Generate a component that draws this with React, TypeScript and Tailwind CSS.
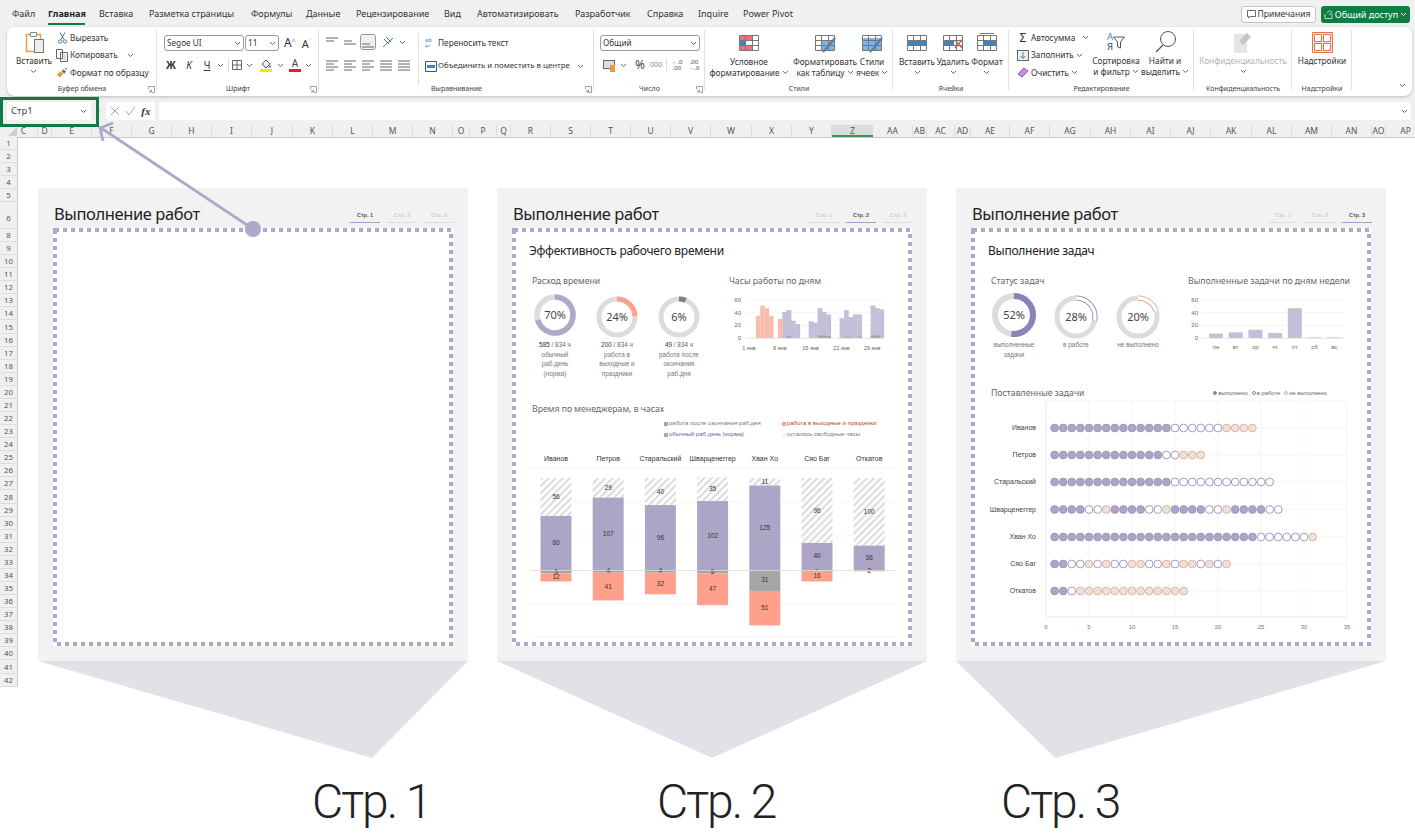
import React from "react";

const P = "#b0a8cc";
const PD = "#8b82b5";
const OR = "#f4a27a";
const tabs: [string, number][] = [["Файл",12],["Главная",48],["Вставка",99],["Разметка страницы",149],["Формулы",251],["Данные",306],["Рецензирование",356],["Вид",444],["Автоматизировать",477],["Разработчик",575],["Справка",647],["Inquire",698],["Power Pivot",743]];
const cols: [string, number][] = [["C",20],["D",14],["E",40],["F",40],["G",40],["H",40],["I",40],["J",41],["K",40],["L",40],["M",40],["N",40],["O",17],["P",27],["Q",14],["R",40],["S",40],["T",40],["U",40],["V",40],["W",41],["X",40],["Y",40],["Z",41],["AA",40],["AB",14],["AC",28],["AD",16],["AE",39],["AF",40],["AG",41],["AH",40],["AI",40],["AJ",40],["AK",41],["AL",40],["AM",40],["AN",40],["AO",14],["AP",40]];
const rows: [string, number][] = [];
for (let i = 1; i <= 42; i++) { if (i === 7) continue; rows.push([String(i), i === 6 ? 26.5 : 13.09]); }

const Chev = ({ className = "" }: { className?: string }) => (
  <svg width="7" height="5" viewBox="0 0 7 5" className={`shrink-0 ${className}`}><path d="M1 1l2.5 2.5L6 1" fill="none" stroke="#555" strokeWidth="0.9" /></svg>
);
const Launcher = () => (
  <svg width="7" height="7" viewBox="0 0 7 7"><path d="M.5 3V.5H6.5V6.5H4M1 3.5l2.5 2.500M3.500 3.500V6H1" fill="none" stroke="#777" strokeWidth="0.7" /></svg>
);
const Lines = ({ w }: { w: number[] }) => (
  <svg width="14" height="12" viewBox="0 0 14 12">
    {w.map((x, i) => x === 0 ? null : <line key={i} x1={1} x2={1 + x} y1={2 + i * 3} y2={2 + i * 3} stroke="#666" strokeWidth="1" />)}
  </svg>
);
const Grid = ({ children, size = 22 }: { children?: React.ReactNode; size?: number }) => (
  <svg width={size} height={size} viewBox="0 0 22 22">
    {children}
    <path d="M1.500 3.500h19v15h-19zM1.500 8.500h19M1.500 13.500h19M7.500 3.500v15M14.500 3.500v15" fill="none" stroke="#777" strokeWidth="1" />
  </svg>
);

const Group = ({ w, label, launcher, children }: { w: string; label: string; launcher?: boolean; children?: React.ReactNode }) => (
  <div className={`${w} flex flex-col h-full shrink-0 relative`}>
    <div className="flex-1 min-h-0">{children}</div>
    <div className="h-[13px] text-[7px] leading-[11px] text-center text-[#444] whitespace-nowrap">{label}</div>
    {launcher && <div className="absolute right-[2px] bottom-[3px]"><Launcher /></div>}
    <div className="absolute right-0 top-[3px] bottom-[6px] w-px bg-[#e1e1e1]" />
  </div>
);
const Big = ({ icon, lines, chev, w, dim, inline }: { icon: React.ReactNode; lines: string[]; chev?: boolean; w: string; dim?: boolean; inline?: boolean }) => (
  <div className={`${w} flex flex-col items-center shrink-0 pt-[3px] ${dim ? "text-[#b5b5b5]" : "text-[#333]"}`}>
    <div className="h-[24px] flex items-center justify-center">{icon}</div>
    <div className="text-[8.300px] leading-[11px] mt-[1px] text-center whitespace-nowrap">
      {lines.map((l, i) => (
        <div key={i} className="flex items-center justify-center gap-[2px]">{l}{inline && i === lines.length - 1 && <Chev />}</div>
      ))}
      {chev && <div className="flex justify-center h-[11px] items-center"><Chev /></div>}
    </div>
  </div>
);
const Small = ({ icon, text, chev }: { icon: React.ReactNode; text: string; chev?: string }) => (
  <div className="h-[17.500px] flex items-center text-[8.300px] text-[#333] whitespace-nowrap">
    <div className="w-[12px] flex justify-center shrink-0">{icon}</div>
    <span className="ml-[2px]">{text}</span>
    {chev && <Chev className={chev} />}
  </div>
);
const Select = ({ w, text }: { w: string; text: string }) => (
  <div className={`${w} h-[16px] border border-[#9a9a9a] rounded-[3px] bg-white flex items-center justify-between pl-[2px] pr-[2px] text-[8.200px] text-[#333]`}>
    <span>{text}</span><Chev />
  </div>
);

const Ribbon = () => (
  <div className="ml-[7px] w-[1405px] h-[69px] bg-white rounded-lg shadow-[0_1px_3px_rgba(0,0,0,0.22)] flex relative">
    <Group w="w-[150px]" label="Буфер обмена" launcher>
      <div className="flex">
        <Big w="w-[49px] pl-[5px]" lines={["Вставить"]} chev icon={
          <svg width="24" height="24" viewBox="0 0 24 24"><path d="M4.500 4.500h14v17h-14z" fill="none" stroke="#e9a23b" strokeWidth="1.500" /><path d="M8.500 2.500h6v4h-6z" fill="#fff" stroke="#888" strokeWidth="1" /><rect x="12.500" y="9.500" width="9" height="13" fill="#eee" stroke="#777" /></svg>
        } />
        <div className="pt-[2px]">
          <Small text="Вырезать" icon={<svg width="11" height="12" viewBox="0 0 11 12"><path d="M3 0.500l4 7M8 .5l-4 7" stroke="#666" fill="none" /><circle cx="3" cy="9.500" r="1.700" fill="none" stroke="#3a86c8" /><circle cx="8" cy="9.500" r="1.700" fill="none" stroke="#3a86c8" /></svg>} />
          <Small text="Копировать" chev="ml-[9px]" icon={<svg width="12" height="13" viewBox="0 0 12 13"><path d="M.5.500h6v9h-6zM4.500 3.500h7v9h-7z" fill="#fff" stroke="#666" /><path d="M6 6h4M6 8h4M6 10h4" stroke="#999" strokeWidth=".7" /></svg>} />
          <Small text="Формат по образцу" icon={<svg width="13" height="12" viewBox="0 0 13 12"><path d="M1 8l4-4 3 3-4 4z" fill="#ef9a3e" /><path d="M6 4l2-2 3 2-2 3z" fill="#777" /><path d="M10 1l2 1" stroke="#444" /></svg>} />
        </div>
      </div>
    </Group>
    <Group w="w-[162px]" label="Шрифт" launcher>
      <div className="pl-[7px] pt-[8px] flex items-center">
        <Select w="w-[80px]" text="Segoe UI" />
        <div className="w-px" />
        <Select w="w-[34px]" text="11" />
        <span className="ml-[5px] text-[12px] text-[#333] leading-none">A<sup className="text-[#4a90d0] text-[7px]">^</sup></span>
        <span className="ml-[6px] text-[11px] text-[#333] leading-none">A<sup className="text-[#4a90d0] text-[7px]">˅</sup></span>
      </div>
      <div className="pl-[5px] mt-[5px] flex items-center h-[18px] text-[#333]">
        <span className="w-[18px] text-center text-[10px] font-bold">Ж</span>
        <span className="w-[18px] text-center text-[10px] italic">К</span>
        <span className="w-[18px] text-center text-[10px] underline">Ч</span>
        <Chev className="ml-[1px]" />
        <div className="w-px h-[14px] bg-[#ddd] ml-[4px] mr-[2px]" />
        <svg width="12" height="12" viewBox="0 0 12 12"><path d="M1.500 1.500h9v9h-9zM6 1.500v9M1.500 6h9" fill="none" stroke="#666" /></svg>
        <Chev className="ml-[3px]" />
        <div className="w-[18px] ml-[4px] flex justify-center">
          <svg width="13" height="14" viewBox="0 0 13 14"><path d="M2 6l4-4 4 4-4 4z" fill="#eee" stroke="#555" /><path d="M10 7l1.500 2.500h-3z" fill="#3a86c8" /><rect x="0" y="11" width="12" height="3" fill="#ffe500" /></svg>
        </div>
        <Chev className="ml-[2px]" />
        <div className="w-[18px] ml-[2px] flex flex-col items-center">
          <span className="text-[10px] leading-[11px] text-[#444]">A</span>
          <span className="w-[12px] h-[3px] bg-[#e41f1f]" />
        </div>
        <Chev className="ml-[1px]" />
      </div>
    </Group>
    <Group w="w-[275px]" label="Выравнивание" launcher>
      <div className="flex">
        <div className="pl-[6px] pt-[6px] w-[99px]">
          <div className="flex items-center h-[18px] gap-[4px]">
            <Lines w={[12, 8, 0, 0]} /><Lines w={[0, 8, 12, 0]} />
            <div className="border border-[#999] rounded-[3px] bg-[#f0f0f0] w-[16px] h-[16px] flex items-center justify-center -mx-[1px]"><Lines w={[0, 0, 8, 12]} /></div>
            <svg className="ml-[3px]" width="13" height="13" viewBox="0 0 13 13"><path d="M1 11L11 2" stroke="#3a86c8" /><path d="M2 3l5 5M4 1l5 5" stroke="#666" /></svg>
            <Chev />
          </div>
          <div className="flex items-center h-[18px] mt-[5px] gap-[4px]">
            <Lines w={[12, 8, 12, 8]} /><Lines w={[12, 8, 12, 8]} /><Lines w={[12, 8, 12, 8]} /><Lines w={[12, 12, 12, 12]} /><Lines w={[12, 12, 12, 12]} />
          </div>
        </div>
        <div className="w-px h-[52px] mt-[6px] bg-[#e1e1e1]" />
        <div className="pl-[6px] pt-[4px]">
          <div className="h-[24px] flex items-center text-[8.300px] text-[#333]"><span className="text-[6px] leading-[6px] text-[#3a86c8] w-[13px]">ab<br />↩</span>Переносить текст</div>
          <div className="h-[22px] flex items-center text-[7.900px] text-[#333] whitespace-nowrap">
            <svg className="mr-[1px]" width="12" height="11" viewBox="0 0 12 11"><path d="M.5.500h11v10H.5z" fill="#fff" stroke="#555" /><rect x="2" y="4" width="8" height="3" fill="#3a86c8" /></svg>
            <span>Объединить и поместить в центре</span><Chev className="ml-[7px]" />
          </div>
        </div>
      </div>
    </Group>
    <Group w="w-[111px]" label="Число" launcher>
      <div className="pl-[6px] pt-[8px]"><Select w="w-[100px]" text="Общий" /></div>
      <div className="pl-[9px] mt-[5px] flex items-center h-[18px] text-[#444]">
        <svg width="13" height="13" viewBox="0 0 13 13"><rect x=".5" y="1.500" width="11" height="8" fill="#ddd" stroke="#666" /><rect x="7" y="6" width="5" height="7" fill="#ee9a3a" /></svg>
        <Chev className="ml-[4px]" />
        <span className="ml-[6px] w-[14px] text-[12px] text-center">%</span>
        <span className="ml-[3px] text-[7px] text-[#888]">000</span>
        <div className="w-px h-[14px] bg-[#ddd] ml-[4px]" />
        <span className="ml-[3px] w-[14px] text-[6px] leading-[6px] text-center"><span className="text-[#3a86c8]">←</span>.0<br />.00</span>
        <span className="ml-[3px] w-[14px] text-[6px] leading-[6px] text-center">.00<br /><span className="text-[#3a86c8]">→</span>.0</span>
      </div>
    </Group>
    <Group w="w-[188px]" label="Стили">
      <div className="flex pl-[3px] pt-[1px]">
        <Big w="w-[82px]" lines={["Условное", "форматирование"]} inline icon={<Grid><rect x="2" y="4" width="12" height="5" fill="#f26d7d" /><rect x="2" y="9" width="5" height="4" fill="#3a86c8" /><rect x="7" y="9" width="7" height="4" fill="#fff" /><rect x="2" y="13" width="12" height="5" fill="#f26d7d" /></Grid>} />
        <Big w="w-[70px]" lines={["Форматировать", "как таблицу"]} inline icon={<Grid><rect x="8" y="9" width="12" height="9" fill="#7db4e6" /><path d="M21 6L12 17l-3 3" stroke="#4a7fb0" strokeWidth="2" fill="none" /></Grid>} />
        <Big w="w-[28px] -ml-[2px]" lines={["Стили", "ячеек"]} inline icon={<Grid><rect x="2" y="6" width="18" height="12" fill="#7db4e6" /><path d="M21 6L12 17l-3 3" stroke="#4a7fb0" strokeWidth="2" fill="none" /></Grid>} />
      </div>
    </Group>
    <Group w="w-[116px]" label="Ячейки">
      <div className="flex pl-[6px] pt-[1px]">
        <Big w="w-[36px]" lines={["Вставить"]} chev icon={<Grid><rect x="2" y="8" width="18" height="6" fill="#3a86c8" /></Grid>} />
        <Big w="w-[36px]" lines={["Удалить"]} chev icon={<Grid><rect x="2" y="8" width="10" height="6" fill="#3a86c8" /><path d="M13 8l7 8M20 8l-7 8" stroke="#e1573c" strokeWidth="1.300" /></Grid>} />
        <Big w="w-[32px]" lines={["Формат"]} chev icon={<Grid><path d="M4 1.500h14" stroke="#3a86c8" /><rect x="7.500" y="8.500" width="13" height="5" fill="#3a86c8" /></Grid>} />
      </div>
    </Group>
    <Group w="w-[185px]" label="Редактирование">
      <div className="flex pl-[8px]">
        <div className="w-[76px] pt-[2px]">
          <Small text="Автосумма" chev="ml-[7px]" icon={<span className="text-[12px] leading-none">Σ</span>} />
          <Small text="Заполнить" chev="ml-[2px]" icon={<svg width="12" height="11" viewBox="0 0 12 11"><rect x=".5" y=".5" width="11" height="10" fill="#eee" stroke="#666" /><path d="M6 2v6M3.500 6L6 8.500 8.500 6" stroke="#3a86c8" fill="none" /></svg>} />
          <Small text="Очистить" chev="ml-[2px]" icon={<svg width="12" height="11" viewBox="0 0 12 11"><path d="M1 7l6-6 4 3-6 6z" fill="#c590d8" stroke="#9a50b5" /></svg>} />
        </div>
        <Big w="w-[46px]" lines={["Сортировка", "и фильтр"]} inline icon={
          <div className="flex items-center">
            <div className="flex flex-col items-center text-[9.500px] leading-[10px]"><span className="text-[#3a86c8]">А</span><span className="text-[#444]">Я</span></div>
            <svg width="12" height="13" viewBox="0 0 12 13"><path d="M.5 1h11l-4 5v6l-3-1V6z" fill="#fff" stroke="#555" /></svg>
          </div>
        } />
        <Big w="w-[44px] ml-[4px]" lines={["Найти и", "выделить"]} inline icon={<svg width="24" height="24" viewBox="0 0 24 24"><circle cx="15" cy="9" r="7.500" fill="none" stroke="#555" /><path d="M10 15l-7 7" stroke="#555" strokeWidth="1.200" /></svg>} />
      </div>
    </Group>
    <Group w="w-[98px]" label="Конфиденциальность">
      <Big w="w-full" dim lines={["Конфиденциальность"]} chev icon={<svg width="20" height="23" viewBox="0 0 20 23"><path d="M1 3h13v19H1z" fill="#e6e6e6" /><path d="M6 10l8-8 4 4-8 8z" fill="#c4c4c4" /></svg>} />
    </Group>
    <Group w="w-[60px]" label="Надстройки">
      <Big w="w-full" lines={["Надстройки"]} icon={<svg width="21" height="21" viewBox="0 0 21 21"><path d="M.5.500h20v20H.5z" fill="#fbe4dc" stroke="#e2734f" /><path d="M2.500 2.500h7v7h-7zM11.500 2.500h7v7h-7zM2.500 11.500h7v7h-7zM11.500 11.500h7v7h-7z" fill="#fff" stroke="#e2734f" /></svg>} />
    </Group>
    <div className="absolute right-[6px] bottom-[8px]"><Chev /></div>
  </div>
);

const Donut = ({ pct, color, stroke, r, sw, hollow }: { pct: number; color: string; stroke?: string; r: number; sw: number; hollow?: boolean }) => {
  const c = 2 * Math.PI * r;
  return (
    <svg width="46" height="46" viewBox="0 0 46 46" className="shrink-0">
      <circle cx="23" cy="23" r={r} fill="none" stroke="#dcdcdc" strokeWidth={sw} />
      <g transform="rotate(-90 23 23)">
        {hollow && <circle cx="23" cy="23" r={r} fill="none" stroke={stroke} strokeWidth={sw} strokeDasharray={`${c * pct / 100} ${c}`} />}
        <circle cx="23" cy="23" r={r} fill="none" stroke={color} strokeWidth={hollow ? sw - 1.6 : sw} strokeDasharray={`${c * pct / 100} ${c}`} />
      </g>
      <text x="23" y="27" textAnchor="middle" fontSize="11" fill="#444">{pct}%</text>
    </svg>
  );
};

const Header = ({ active }: { active: number }) => (
  <div className="flex items-end h-[40px] pr-[14px] pl-[16px]">
    <div className="flex-1 text-[16.500px] tracking-[-0.4px] leading-[24px] pb-[2px] text-[#222] whitespace-nowrap">Выполнение работ</div>
    <div className="flex gap-[7px] pb-[5px]">
      {[1, 2, 3].map(n => (
        <div key={n} className={`w-[30px] h-[12px] text-center text-[5.500px] leading-[9px] font-bold font-['Liberation_Sans',sans-serif] border-b ${n === active ? "text-[#555] border-[#a8a0c8]" : "text-[#cfcfcf] border-[#dcdcdc]"}`}>Стр. {n}</div>
      ))}
    </div>
  </div>
);

const Frame = ({ children }: { children?: React.ReactNode }) => (
  <div className="relative ml-[15px] w-[400px] h-[418px] bg-white">
    <svg className="absolute inset-0 pointer-events-none" width="400" height="418" viewBox="0 0 400 418">
      <rect x="2" y="2" width="396" height="414" fill="none" stroke={P} strokeWidth="4" strokeDasharray="4 4" />
    </svg>
    {children}
  </div>
);

const Sec = ({ children, className = "" }: { children: React.ReactNode; className?: string }) => (
  <div className={`h-[14px] text-[8.700px] leading-[14px] text-[#666] whitespace-nowrap ${className}`}>{children}</div>
);

const Tiny = ({ lines, first }: { lines: string[]; first?: React.ReactNode }) => (
  <div className="text-[6.400px] leading-[9.500px] text-[#777] text-center font-['Liberation_Sans',sans-serif] whitespace-nowrap">
    {first && <div className="text-[#666]">{first}</div>}
    {lines.map((l, i) => <div key={i}>{l}</div>)}
  </div>
);

const days = [0,0,35,51,47,35,0,30,41,44,27,22,0,0,26,24,47,41,37,0,0,31,44,33,37,37,0,0,51,47,45];
const pink = new Set([2,3,4,5,7]);
const dark: Record<number, number> = { 9: 3, 16: 4, 17: 4, 18: 3, 22: 2, 23: 1, 25: 2, 28: 4, 29: 4 };
const Y = (v: number) => 338 - v * 38 / 60;
const tiny = "Liberation Sans, sans-serif";

const DaysChart = () => (
  <svg width="170" height="64" viewBox="725 292 170 64">
    {[60, 40, 20].map(v => <line key={v} x1="747" x2="884" y1={Y(v)} y2={Y(v)} stroke="#f0f0f0" strokeWidth=".7" />)}
    {days.map((d, i) => d > 0 && <rect key={i} x={747 + i * 4.42} y={Y(d)} width={4.42} height={338 - Y(d)} fill={pink.has(i) ? "#f7bcae" : "#c4bfd8"} stroke="#b8b2d0" strokeWidth={pink.has(i) ? 0 : .2} />)}
    {Object.entries(dark).map(([k, v]) => <rect key={k} x={747 + +k * 4.42} y={338 - v * .63} width={4.42} height={v * .63} fill="#a3a0ab" />)}
    <line x1="747" x2="884" y1="338.300" y2="338.300" stroke="#dcdcdc" strokeWidth=".7" />
    {[60, 40, 20, 0].map(v => <text key={v} x="741" y={Y(v) + 2} textAnchor="end" fontSize="6" fill="#666" fontFamily={tiny}>{v}</text>)}
    {["1 янв", "8 янв", "15 янв", "22 янв", "29 янв"].map((t, i) => <text key={t} x={749 + i * 30.8} y="350" textAnchor="middle" fontSize="5.500" fill="#666" fontFamily={tiny}>{t}</text>)}
  </svg>
);

const WeekChart = () => {
  const v = [7, 9, 13, 8, 47, 1, 1];
  const n = ["пн", "вт", "ср", "чт", "пт", "сб", "вс"];
  return (
    <svg width="170" height="64" viewBox="1184 292 170 64">
      {[60, 40, 20].map(x => <line key={x} x1="1201" x2="1344" y1={Y(x)} y2={Y(x)} stroke="#f0f0f0" strokeWidth=".7" />)}
      {v.map((d, i) => <rect key={i} x={1209 + i * 19.700} y={Y(d)} width="14" height={338 - Y(d)} fill="#c4bfd8" />)}
      <line x1="1201" x2="1344" y1="338.300" y2="338.300" stroke="#dcdcdc" strokeWidth=".7" />
      {[60, 40, 20, 0].map(x => <text key={x} x="1198" y={Y(x) + 2} textAnchor="end" fontSize="6" fill="#666" fontFamily={tiny}>{x}</text>)}
      {n.map((t, i) => <text key={t} x={1216 + i * 19.700} y="349" textAnchor="middle" fontSize="6" fill="#666" fontFamily={tiny}>{t}</text>)}
    </svg>
  );
};

const mgr: [string, number, number, number, number][] = [
  ["Иванов", 56, 80, 5, 12], ["Петров", 29, 107, 4, 41], ["Старальский", 40, 96, 4, 32], ["Шварценеггер", 35, 102, 5, 47], ["Хван Хо", 11, 125, 31, 51], ["Сяо Баг", 96, 40, 1, 16], ["Откатов", 100, 36, 0, 2],
];
const ManagerChart = () => {
  const k = 0.676, base = 570;
  return (
    <svg width="400" height="204" viewBox="512 442 400 204">
      <defs>
        <pattern id="hatch" width="5" height="5" patternUnits="userSpaceOnUse" patternTransform="rotate(-45)">
          <rect width="5" height="5" fill="#fff" /><rect width="5" height="2.200" fill="#dcdcdc" />
        </pattern>
      </defs>
      {[468, 502, 536, 604, 637].map(y => <line key={y} x1="530" x2="896" y1={y} y2={y} stroke="#f1f1f1" strokeWidth=".7" />)}
      {mgr.map(([n, free, norm, after, wk], i) => {
        const cx = 556 + i * 52.2, x = cx - 15.500;
        const h1 = norm * k, h2 = free * k, h3 = after * k, h4 = wk * k;
        const fs = 6.500;
        return (
          <g key={n}>
            <text x={cx} y="461" textAnchor="middle" fontSize="7" fill="#333" fontFamily={tiny}>{n}</text>
            <rect x={x} y={base - h1 - h2} width="31" height={h2} fill="url(#hatch)" />
            <rect x={x} y={base - h1} width="31" height={h1} fill="#aca5c6" />
            <rect x={x} y={base} width="31" height={h3} fill="#a6a6a6" />
            <rect x={x} y={base + h3} width="31" height={h4} fill="#ffa08c" />
            <text x={cx} y={base - h1 - h2 / 2 + 2} textAnchor="middle" fontSize={fs} fill="#333" fontFamily={tiny}>{free}</text>
            <text x={cx} y={base - h1 / 2 + 2} textAnchor="middle" fontSize={fs} fill="#333" fontFamily={tiny}>{norm}</text>
            {after > 0 && <text x={cx} y={base + (after < 2 ? 1 : Math.max(h3 / 2 + 2, 2))} textAnchor="middle" fontSize={fs} fill="#333" fontFamily={tiny}>{after > 1 ? after : "-"}</text>}
            <text x={cx} y={base + h3 + Math.max(h4 / 2 + 2, 2.500)} textAnchor="middle" fontSize={fs} fill="#333" fontFamily={tiny}>{wk}</text>
          </g>
        );
      })}
      <line x1="530" x2="896" y1="570.500" y2="570.500" stroke="#dcdcdc" strokeWidth=".8" />
    </svg>
  );
};

const seq = (s: [string, number][]) => s.flatMap(([c, n]) => Array<string>(n).fill(c));
const tasks: [string, string[]][] = [
  ["Иванов", seq([["d", 14], ["w", 6], ["n", 4]])],
  ["Петров", seq([["d", 13], ["w", 2], ["n", 3]])],
  ["Старальский", seq([["d", 14], ["w", 12]])],
  ["Шварценеггер", seq([["d", 4], ["w", 2], ["n", 1], ["d", 4], ["w", 2], ["n", 1], ["d", 4], ["w", 2], ["n", 1], ["d", 4], ["w", 2]])],
  ["Хван Хо", seq([["d", 24], ["w", 6], ["n", 1]])],
  ["Сяо Баг", "ddwwnwnwwnnwwnwnnwnwn".split("")],
  ["Откатов", seq([["d", 2], ["w", 1], ["n", 13]])],
];
const TaskChart = () => {
  const X = (v: number) => 1046 + v * 8.6;
  const ys = [428, 455, 482, 509.500, 537, 564, 591];
  return (
    <svg width="400" height="234" viewBox="971 400 400 234">
      <defs>
        <pattern id="hatch2" width="2.500" height="2.500" patternUnits="userSpaceOnUse" patternTransform="rotate(-45)">
          <rect width="2.500" height="2.500" fill="#f4f4f4" /><rect width="2.500" height="1.100" fill="#cfcfcf" />
        </pattern>
      </defs>
      {[0, 5, 10, 15, 20, 25, 30, 35].map(v => <g key={v}>
        <line x1={X(v)} x2={X(v)} y1="401" y2="617" stroke={v === 0 ? "#e4e4e4" : "#f1f1f1"} strokeWidth=".7" />
        <text x={X(v)} y="629" textAnchor="middle" fontSize="6" fill="#777" fontFamily={tiny}>{v}</text>
      </g>)}
      <line x1="1046" x2="1347" y1="401" y2="401" stroke="#f1f1f1" strokeWidth=".7" />
      <line x1="1046" x2="1347" y1="617" y2="617" stroke="#e4e4e4" strokeWidth=".7" />
      {tasks.map(([n, list], r) => <g key={n}>
        <line x1="1046" x2="1347" y1={ys[r]} y2={ys[r]} stroke="#f1f1f1" strokeWidth=".7" />
        <text x="1036" y={ys[r] + 2} textAnchor="end" fontSize="7" fill="#444" fontFamily={tiny}>{n}</text>
        {list.map((t, i) => <circle key={i} cx={X(i + 1)} cy={ys[r]} r="3.900" fill={t === "d" ? "#aca5c6" : t === "w" ? "#fff" : "url(#hatch2)"} stroke={t === "d" ? "#9a92bc" : t === "w" ? "#8b82b5" : "#f4a27a"} strokeWidth=".8" />)}
      </g>)}
    </svg>
  );
};

const LegendDot = ({ fill, stroke, text }: { fill: string; stroke: string; text: string }) => (
  <span className="flex items-center gap-[1px] text-[5.800px] text-[#666] font-['Liberation_Sans',sans-serif] whitespace-nowrap">
    <span className="w-[4px] h-[4px] rounded-full border-[0.700px]" style={{ background: fill, borderColor: stroke }} />{text}
  </span>
);
const LegendSq = ({ color, text, cls }: { color: string; text: string; cls: string }) => (
  <div className={`flex items-center gap-[1px] text-[6px] leading-[11px] font-['Liberation_Sans',sans-serif] whitespace-nowrap ${cls}`}>
    <span className="w-[4px] h-[4px]" style={{ background: color }} />{text}
  </div>
);

const Title = ({ children }: { children: React.ReactNode }) => (
  <div className="relative pl-[17px] pt-[14px] h-[46px] text-[12px] tracking-[-0.25px] leading-[18px] text-[#222] whitespace-nowrap">{children}</div>
);

const Page2 = () => (
  <Frame>
    <Title>Эффективность рабочего времени</Title>
    <div className="relative flex h-[128px]">
      <div className="w-[217px] pl-[12px]">
        <Sec className="pl-[8px]">Расход времени</Sec>
        <div className="flex">
          <div className="w-[62px] flex flex-col items-center pt-[4px]"><Donut pct={70} color={P} r={18} sw={5.500} /><div className="mt-[2px]"><Tiny first={<><span className="text-[#333]">585</span> / 834 ч</>} lines={["обычный", "раб.день", "(норма)"]} /></div></div>
          <div className="w-[62px] flex flex-col items-center pt-[6px]"><Donut pct={24} color="#ffa08c" r={18} sw={5} /><div><Tiny first={<><span className="text-[#333]">200</span> / 834 ч</>} lines={["работа в", "выходные и", "праздники"]} /></div></div>
          <div className="w-[62px] flex flex-col items-center pt-[6px]"><Donut pct={6} color="#7f7f7f" r={18} sw={5} /><div><Tiny first={<><span className="text-[#333]">49</span> / 834 ч</>} lines={["работа после", "окончания", "раб.дня"]} /></div></div>
        </div>
      </div>
      <div className="flex-1">
        <Sec>Часы работы по дням</Sec>
        <div className="-ml-[4px] mt-[4px]"><DaysChart /></div>
      </div>
    </div>
    <Sec className="relative pl-[20px]">Время по менеджерам, в часах</Sec>
    <div className="relative pl-[152px] grid grid-cols-[118px_1fr] h-[26px] pt-[2px] content-start">
      <LegendSq color="#a6a6a6" text="работа после окончания раб.дня" cls="text-[#777]" />
      <LegendSq color="#ffa08c" text="работа в выходные и праздники" cls="text-[#b5462f]" />
      <LegendSq color="#aca5c6" text="обычный раб.день (норма)" cls="text-[#6a6195]" />
      <LegendSq color="#f2f2f2" text="остались свободные часы" cls="text-[#777]" />
    </div>
    <div className="relative"><ManagerChart /></div>
  </Frame>
);
const Page3 = () => (
  <Frame>
    <Title>Выполнение задач</Title>
    <div className="relative flex h-[112px]">
      <div className="w-[217px] pl-[12px]">
        <Sec className="pl-[8px]">Статус задач</Sec>
        <div className="flex">
          <div className="w-[62px] flex flex-col items-center pt-[4px]"><Donut pct={52} color={PD} r={19} sw={6} /><div className="mt-[2px]"><Tiny lines={["выполненные", "задачи"]} /></div></div>
          <div className="w-[62px] flex flex-col items-center pt-[6px]"><Donut pct={28} color="#fff" stroke={PD} hollow r={19} sw={5} /><div><Tiny lines={["в работе"]} /></div></div>
          <div className="w-[62px] flex flex-col items-center pt-[6px]"><Donut pct={20} color="#fff" stroke={OR} hollow r={19} sw={5} /><div><Tiny lines={["не выполнено"]} /></div></div>
        </div>
      </div>
      <div className="flex-1">
        <Sec>Выполненные задачи по дням недели</Sec>
        <div className="-ml-[4px] mt-[4px]"><WeekChart /></div>
      </div>
    </div>
    <div className="relative flex items-center pl-[20px] pr-[44px] h-[14px] justify-between">
      <Sec>Поставленные задачи</Sec>
      <div className="flex gap-[4px]">
        <LegendDot fill="#8b82b5" stroke="#8b82b5" text="выполнено" />
        <LegendDot fill="#fff" stroke="#8b82b5" text="в работе" />
        <LegendDot fill="#fff" stroke={OR} text="не выполнено" />
      </div>
    </div>
    <div className="relative"><TaskChart /></div>
  </Frame>
);

const Card = ({ n, apex, cap, children }: { n: number; apex: number; cap: string; children?: React.ReactNode }) => (
  <div className="w-[430px] shrink-0">
    <div className="h-[473px] bg-[#f2f2f2]">
      <Header active={n} />
      {children}
    </div>
    <svg width="430" height="97" viewBox="0 0 430 97" className="block"><polygon points={`0,0 430,0 ${apex},97`} fill="#e1e2e8" /></svg>
    <div className={`text-[48px] leading-[56px] tracking-[-2px] font-light font-['Roboto',sans-serif] text-[#222] mt-[16px] whitespace-nowrap ${cap}`}>Стр. {n}</div>
  </div>
);

export default function App() {
  return (
    <div className="w-[1415px] h-[835px] relative overflow-hidden bg-white font-['Noto_Sans',sans-serif] flex flex-col">
      <div className="bg-[#f0f0f0] h-[137px] shrink-0 flex flex-col">
        <div className="h-[27px] flex relative shrink-0">
          <div className="relative w-[900px] text-[9px] leading-[27px] text-[#333]">
            <div className="flex">
              {tabs.map(([t, x], i) => (
                <div key={t} className={`whitespace-nowrap ${t === "Главная" ? "font-bold text-[#222] relative" : ""}`} style={{ width: (tabs[i + 1]?.[1] ?? x + 60) - x, marginLeft: i === 0 ? x : 0 }}>
                  {t}{t === "Главная" && <span className="absolute left-0 w-[37px] top-[23px] h-[2px] bg-[#107c41]" />}
                </div>
              ))}
            </div>
          </div>
          <div className="ml-auto flex items-center gap-[5px] pr-[5px] pt-[2px]">
            <div className="w-[75px] h-[17px] border border-[#c4c4c4] bg-white rounded-[3px] flex items-center justify-center gap-[2px] text-[8.500px] text-[#333]">
              <svg width="9" height="9" viewBox="0 0 9 9"><path d="M.5.500h8v6H3L1.500 8V6.500h-1z" fill="none" stroke="#444" strokeWidth=".8" /></svg>Примечания
            </div>
            <div className="w-[89px] h-[17px] bg-[#107c41] rounded-[3px] flex items-center justify-center gap-[2px] text-[9px] text-white whitespace-nowrap">
              <svg width="9" height="9" viewBox="0 0 9 9"><path d="M1 4v4.500h7V4M3 3l3-2.500L8 2.500 5 5" fill="none" stroke="#fff" strokeWidth=".7" /></svg>Общий доступ
              <svg width="7" height="5" viewBox="0 0 7 5"><path d="M1 1l2.500 2.500L6 1" fill="none" stroke="#fff" strokeWidth=".9" /></svg>
            </div>
          </div>
        </div>
        <Ribbon />
        <div className="h-[18px] mt-[6px] flex items-center shrink-0 pl-[7px]">
          <div className="w-[84px] h-full bg-white rounded-[3px] flex items-center justify-between px-[4px] text-[9.500px] text-[#444]">Стр1<Chev /></div>
          <div className="w-[15px] text-center text-[#aaa] text-[8px]">⋮</div>
          <div className="w-[49px] h-full bg-white rounded-[3px] flex items-center justify-around px-[2px]">
            <svg width="10" height="10" viewBox="0 0 10 10"><path d="M1 1l8 8M9 1L1 9" stroke="#aaa" /></svg>
            <svg width="11" height="10" viewBox="0 0 11 10"><path d="M1 5l3 4 6-8" fill="none" stroke="#aaa" /></svg>
            <span className="font-['Liberation_Serif',serif] italic font-bold text-[11px] text-[#333] leading-none">fx</span>
          </div>
          <div className="w-[1252px] ml-[4px] h-full bg-white rounded-[3px] flex items-center justify-end pr-[3px]"><Chev /></div>
        </div>
        <div className="h-[13px] mt-[5px] flex shrink-0 border-b border-[#c8c8c8]">
          <div className="w-[18px] shrink-0 relative"><svg className="absolute right-[1px] bottom-[1px]" width="9" height="9" viewBox="0 0 9 9"><polygon points="9,0 9,9 0,9" fill="#cfcfcf" /></svg></div>
          {cols.map(([c, w]) => (
            <div key={c} className={`shrink-0 text-center text-[8.500px] leading-[12px] ${c === "Z" ? "bg-[#dcdcdc] border-b-2 border-[#3f8f62] text-[#107c41]" : "text-[#555] border-r border-[#dcdcdc]"} ${c === "C" ? "pr-[8px]" : ""}`} style={{ width: w }}>{c}</div>
          ))}
        </div>
      </div>
      <div className="flex flex-1 min-h-0">
        <div className="w-[18px] shrink-0 self-start bg-[#f0f0f0] border-r border-[#c8c8c8]">
          {rows.map(([r, h]) => (
            <div key={r} className={`text-center text-[7.800px] leading-[12px] text-[#555] border-b border-[#dedede] flex items-end justify-center ${r === "6" ? "pb-[4px]" : ""}`} style={{ height: h }}>{r}</div>
          ))}
        </div>
        <div className="flex gap-[29px] pl-[20px] pt-[51px]">
          <Card n={1} apex={334} cap="pl-[274px]"><Frame /></Card>
          <Card n={2} apex={215} cap="pl-[160px]"><Page2 /></Card>
          <Card n={3} apex={99} cap="pl-[45px]"><Page3 /></Card>
        </div>
      </div>
      <div className="absolute left-0 top-[97px] w-[99px] h-[30px] border-[3px] border-[#0f7a45] pointer-events-none" />
      <svg className="absolute inset-0 pointer-events-none" width="1415" height="835" viewBox="0 0 1415 835">
        <path d="M250 227L101 128M113 123L100 128L103 141" fill="none" stroke={P} strokeWidth="2.800" />
        <circle cx="253" cy="229" r="8" fill={P} />
      </svg>
    </div>
  );
}
